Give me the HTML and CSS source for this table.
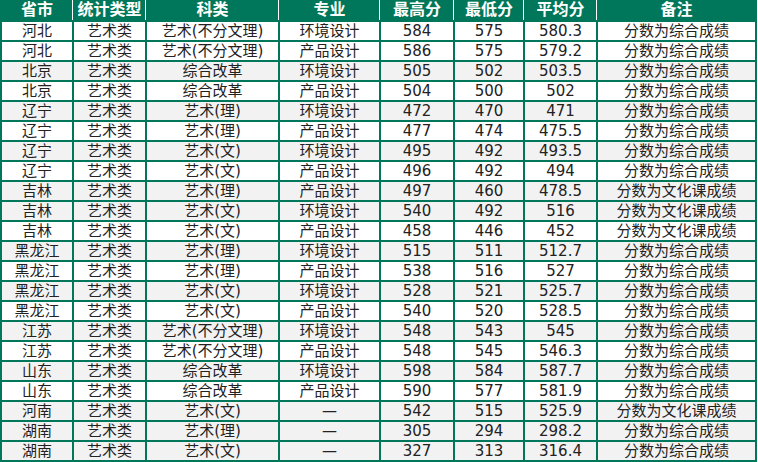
FILE: index.html
```html
<!DOCTYPE html>
<html lang="zh">
<head>
<meta charset="utf-8">
<title>艺术类录取分数</title>
<link rel="stylesheet" href="styles.css">
</head>
<body>
<div class="table">
  <div class="row head">
    <div class="cell">省市</div><div class="cell">统计类型</div><div class="cell">科类</div><div class="cell">专业</div><div class="cell">最高分</div><div class="cell">最低分</div><div class="cell">平均分</div><div class="cell">备注</div>
  </div>
  <div class="row"><div class="cell">河北</div><div class="cell">艺术类</div><div class="cell">艺术(不分文理)</div><div class="cell">环境设计</div><div class="cell">584</div><div class="cell">575</div><div class="cell">580.3</div><div class="cell">分数为综合成绩</div></div>
  <div class="row"><div class="cell">河北</div><div class="cell">艺术类</div><div class="cell">艺术(不分文理)</div><div class="cell">产品设计</div><div class="cell">586</div><div class="cell">575</div><div class="cell">579.2</div><div class="cell">分数为综合成绩</div></div>
  <div class="row alt"><div class="cell">北京</div><div class="cell">艺术类</div><div class="cell">综合改革</div><div class="cell">环境设计</div><div class="cell">505</div><div class="cell">502</div><div class="cell">503.5</div><div class="cell">分数为综合成绩</div></div>
  <div class="row"><div class="cell">北京</div><div class="cell">艺术类</div><div class="cell">综合改革</div><div class="cell">产品设计</div><div class="cell">504</div><div class="cell">500</div><div class="cell">502</div><div class="cell">分数为综合成绩</div></div>
  <div class="row alt"><div class="cell">辽宁</div><div class="cell">艺术类</div><div class="cell">艺术(理)</div><div class="cell">环境设计</div><div class="cell">472</div><div class="cell">470</div><div class="cell">471</div><div class="cell">分数为综合成绩</div></div>
  <div class="row"><div class="cell">辽宁</div><div class="cell">艺术类</div><div class="cell">艺术(理)</div><div class="cell">产品设计</div><div class="cell">477</div><div class="cell">474</div><div class="cell">475.5</div><div class="cell">分数为综合成绩</div></div>
  <div class="row alt"><div class="cell">辽宁</div><div class="cell">艺术类</div><div class="cell">艺术(文)</div><div class="cell">环境设计</div><div class="cell">495</div><div class="cell">492</div><div class="cell">493.5</div><div class="cell">分数为综合成绩</div></div>
  <div class="row"><div class="cell">辽宁</div><div class="cell">艺术类</div><div class="cell">艺术(文)</div><div class="cell">产品设计</div><div class="cell">496</div><div class="cell">492</div><div class="cell">494</div><div class="cell">分数为综合成绩</div></div>
  <div class="row alt"><div class="cell">吉林</div><div class="cell">艺术类</div><div class="cell">艺术(理)</div><div class="cell">产品设计</div><div class="cell">497</div><div class="cell">460</div><div class="cell">478.5</div><div class="cell">分数为文化课成绩</div></div>
  <div class="row alt"><div class="cell">吉林</div><div class="cell">艺术类</div><div class="cell">艺术(文)</div><div class="cell">环境设计</div><div class="cell">540</div><div class="cell">492</div><div class="cell">516</div><div class="cell">分数为文化课成绩</div></div>
  <div class="row"><div class="cell">吉林</div><div class="cell">艺术类</div><div class="cell">艺术(文)</div><div class="cell">产品设计</div><div class="cell">458</div><div class="cell">446</div><div class="cell">452</div><div class="cell">分数为文化课成绩</div></div>
  <div class="row alt"><div class="cell">黑龙江</div><div class="cell">艺术类</div><div class="cell">艺术(理)</div><div class="cell">环境设计</div><div class="cell">515</div><div class="cell">511</div><div class="cell">512.7</div><div class="cell">分数为综合成绩</div></div>
  <div class="row"><div class="cell">黑龙江</div><div class="cell">艺术类</div><div class="cell">艺术(理)</div><div class="cell">产品设计</div><div class="cell">538</div><div class="cell">516</div><div class="cell">527</div><div class="cell">分数为综合成绩</div></div>
  <div class="row alt"><div class="cell">黑龙江</div><div class="cell">艺术类</div><div class="cell">艺术(文)</div><div class="cell">环境设计</div><div class="cell">528</div><div class="cell">521</div><div class="cell">525.7</div><div class="cell">分数为综合成绩</div></div>
  <div class="row"><div class="cell">黑龙江</div><div class="cell">艺术类</div><div class="cell">艺术(文)</div><div class="cell">产品设计</div><div class="cell">540</div><div class="cell">520</div><div class="cell">528.5</div><div class="cell">分数为综合成绩</div></div>
  <div class="row alt"><div class="cell">江苏</div><div class="cell">艺术类</div><div class="cell">艺术(不分文理)</div><div class="cell">环境设计</div><div class="cell">548</div><div class="cell">543</div><div class="cell">545</div><div class="cell">分数为综合成绩</div></div>
  <div class="row"><div class="cell">江苏</div><div class="cell">艺术类</div><div class="cell">艺术(不分文理)</div><div class="cell">产品设计</div><div class="cell">548</div><div class="cell">545</div><div class="cell">546.3</div><div class="cell">分数为综合成绩</div></div>
  <div class="row alt"><div class="cell">山东</div><div class="cell">艺术类</div><div class="cell">综合改革</div><div class="cell">环境设计</div><div class="cell">598</div><div class="cell">584</div><div class="cell">587.7</div><div class="cell">分数为综合成绩</div></div>
  <div class="row"><div class="cell">山东</div><div class="cell">艺术类</div><div class="cell">综合改革</div><div class="cell">产品设计</div><div class="cell">590</div><div class="cell">577</div><div class="cell">581.9</div><div class="cell">分数为综合成绩</div></div>
  <div class="row alt"><div class="cell">河南</div><div class="cell">艺术类</div><div class="cell">艺术(文)</div><div class="cell">—</div><div class="cell">542</div><div class="cell">515</div><div class="cell">525.9</div><div class="cell">分数为文化课成绩</div></div>
  <div class="row alt"><div class="cell">湖南</div><div class="cell">艺术类</div><div class="cell">艺术(理)</div><div class="cell">—</div><div class="cell">305</div><div class="cell">294</div><div class="cell">298.2</div><div class="cell">分数为综合成绩</div></div>
  <div class="row alt"><div class="cell">湖南</div><div class="cell">艺术类</div><div class="cell">艺术(文)</div><div class="cell">—</div><div class="cell">327</div><div class="cell">313</div><div class="cell">316.4</div><div class="cell">分数为综合成绩</div></div>
</div>
</body>
</html>
```
FILE: styles.css
```css
html, body {
  margin: 0;
  padding: 0;
  background: #ffffff;
}

.table {
  width: 757px;
  box-sizing: border-box;
  display: flex;
  flex-direction: column;
  gap: 2px;
  padding: 0 2px 2px 2px;
  background: #00775a;
  font-family: "DejaVu Sans", "Noto Sans CJK SC", sans-serif;
  font-size: 15px;
  color: #222222;
}

.row {
  display: grid;
  grid-template-columns: 70px 71px 131px 99px 72px 68px 71px 157px;
  column-gap: 2px;
  height: 18px;
}

.cell {
  background: #ffffff;
  text-align: center;
  line-height: 18px;
  white-space: nowrap;
  overflow: hidden;
}

.row.alt .cell {
  background: #f2f2f2;
}

.row.head {
  height: 20px;
}

.row.head .cell {
  background: #00775a;
  color: #ffffff;
  font-weight: bold;
  font-size: 16px;
  line-height: 20px;
  box-shadow: 1px 0 0 #ffffff;
}

.row.head .cell:last-child {
  box-shadow: none;
}
```
